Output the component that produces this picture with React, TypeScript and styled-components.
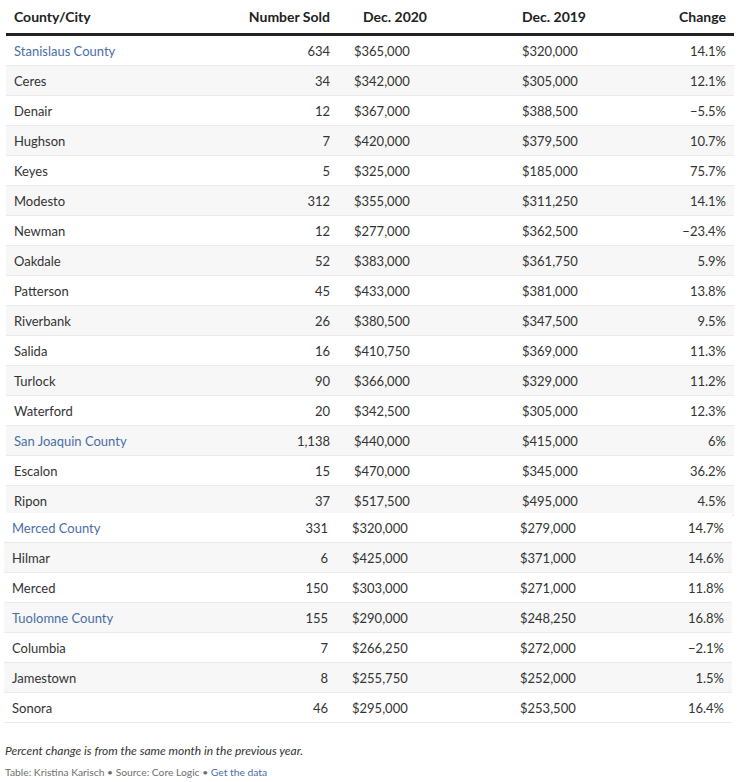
import React from 'react';
import styled, { createGlobalStyle } from 'styled-components';

const GlobalStyle = createGlobalStyle`
  body {
    margin: 0;
    background: #ffffff;
    font-family: Lato, "Open Sans", sans-serif;
    color: #333333;
  }
`;

interface Row {
  name: string;
  sold: string;
  dec2020: string;
  dec2019: string;
  change: string;
  county?: boolean;
}

const upperRows: Row[] = [
  { name: 'Stanislaus County', sold: '634', dec2020: '$365,000', dec2019: '$320,000', change: '14.1%', county: true },
  { name: 'Ceres', sold: '34', dec2020: '$342,000', dec2019: '$305,000', change: '12.1%' },
  { name: 'Denair', sold: '12', dec2020: '$367,000', dec2019: '$388,500', change: '\u22125.5%' },
  { name: 'Hughson', sold: '7', dec2020: '$420,000', dec2019: '$379,500', change: '10.7%' },
  { name: 'Keyes', sold: '5', dec2020: '$325,000', dec2019: '$185,000', change: '75.7%' },
  { name: 'Modesto', sold: '312', dec2020: '$355,000', dec2019: '$311,250', change: '14.1%' },
  { name: 'Newman', sold: '12', dec2020: '$277,000', dec2019: '$362,500', change: '\u221223.4%' },
  { name: 'Oakdale', sold: '52', dec2020: '$383,000', dec2019: '$361,750', change: '5.9%' },
  { name: 'Patterson', sold: '45', dec2020: '$433,000', dec2019: '$381,000', change: '13.8%' },
  { name: 'Riverbank', sold: '26', dec2020: '$380,500', dec2019: '$347,500', change: '9.5%' },
  { name: 'Salida', sold: '16', dec2020: '$410,750', dec2019: '$369,000', change: '11.3%' },
  { name: 'Turlock', sold: '90', dec2020: '$366,000', dec2019: '$329,000', change: '11.2%' },
  { name: 'Waterford', sold: '20', dec2020: '$342,500', dec2019: '$305,000', change: '12.3%' },
  { name: 'San Joaquin County', sold: '1,138', dec2020: '$440,000', dec2019: '$415,000', change: '6%', county: true },
  { name: 'Escalon', sold: '15', dec2020: '$470,000', dec2019: '$345,000', change: '36.2%' },
  { name: 'Ripon', sold: '37', dec2020: '$517,500', dec2019: '$495,000', change: '4.5%' },
];

const lowerRows: Row[] = [
  { name: 'Merced County', sold: '331', dec2020: '$320,000', dec2019: '$279,000', change: '14.7%', county: true },
  { name: 'Hilmar', sold: '6', dec2020: '$425,000', dec2019: '$371,000', change: '14.6%' },
  { name: 'Merced', sold: '150', dec2020: '$303,000', dec2019: '$271,000', change: '11.8%' },
  { name: 'Tuolomne County', sold: '155', dec2020: '$290,000', dec2019: '$248,250', change: '16.8%', county: true },
  { name: 'Columbia', sold: '7', dec2020: '$266,250', dec2019: '$272,000', change: '\u22122.1%' },
  { name: 'Jamestown', sold: '8', dec2020: '$255,750', dec2019: '$252,000', change: '1.5%' },
  { name: 'Sonora', sold: '46', dec2020: '$295,000', dec2019: '$253,500', change: '16.4%' },
];

const Page = styled.div`
  width: 744px;
  height: 782px;
  overflow: hidden;
`;

const Table = styled.div<{ $inset: number }>`
  margin-left: ${(p) => p.$inset}px;
  width: 728px;
  font-size: 13px;
`;

const LowerTable = styled(Table)`
  margin-top: -3px;
`;

const grid = `
  display: grid;
  grid-template-columns: 216px 100px 192px 104px 100px;
  padding: 0 8px;
  align-items: center;
`;

const HeaderRow = styled.div`
  ${grid}
  height: 33px;
  border-bottom: 3px solid #222222;
  font-size: 14px;
  font-weight: 700;
  color: #222222;
`;

const BodyRow = styled.div<{ $shaded: boolean }>`
  ${grid}
  height: 30px;
  box-sizing: border-box;
  background: ${(p) => (p.$shaded ? '#f7f7f7' : '#ffffff')};
  border-bottom: 1px solid #ebebeb;
  color: #333333;
`;

const Cell = styled.div<{ $align?: 'left' | 'right'; $indent?: number }>`
  text-align: ${(p) => p.$align ?? 'left'};
  padding-left: ${(p) => p.$indent ?? 0}px;
  white-space: nowrap;
`;

const NameCell = styled(Cell)<{ $county?: boolean }>`
  color: ${(p) => (p.$county ? '#4a6ea8' : '#333333')};
`;

const Notes = styled.div`
  padding: 20px 5px 0;
`;

const Note = styled.p`
  margin: 0 0 8px;
  font-size: 12px;
  font-style: italic;
  color: #333333;
`;

const Credit = styled.p`
  margin: 0;
  font-size: 10.3px;
  color: #6f6f6f;
`;

const DataLink = styled.span`
  color: #4a6ea8;
`;

const Rows = ({ rows }: { rows: Row[] }) => (
  <>
    {rows.map((r, i) => (
      <BodyRow key={r.name} $shaded={i % 2 === 1}>
        <NameCell $county={r.county}>{r.name}</NameCell>
        <Cell $align="right">{r.sold}</Cell>
        <Cell $indent={24}>{r.dec2020}</Cell>
        <Cell>{r.dec2019}</Cell>
        <Cell $align="right">{r.change}</Cell>
      </BodyRow>
    ))}
  </>
);

const App = (): JSX.Element => {
  return (
    <Page>
      <GlobalStyle />
      <Table $inset={6}>
        <HeaderRow>
          <Cell>County/City</Cell>
          <Cell $align="right">Number Sold</Cell>
          <Cell $indent={33}>Dec. 2020</Cell>
          <Cell>Dec. 2019</Cell>
          <Cell $align="right">Change</Cell>
        </HeaderRow>
        <Rows rows={upperRows} />
      </Table>
      <LowerTable $inset={4}>
        <Rows rows={lowerRows} />
      </LowerTable>
      <Notes>
        <Note>Percent change is from the same month in the previous year.</Note>
        <Credit>
          Table: Kristina Karisch • Source: Core Logic • <DataLink>Get the data</DataLink>
        </Credit>
      </Notes>
    </Page>
  );
};

export default App;
